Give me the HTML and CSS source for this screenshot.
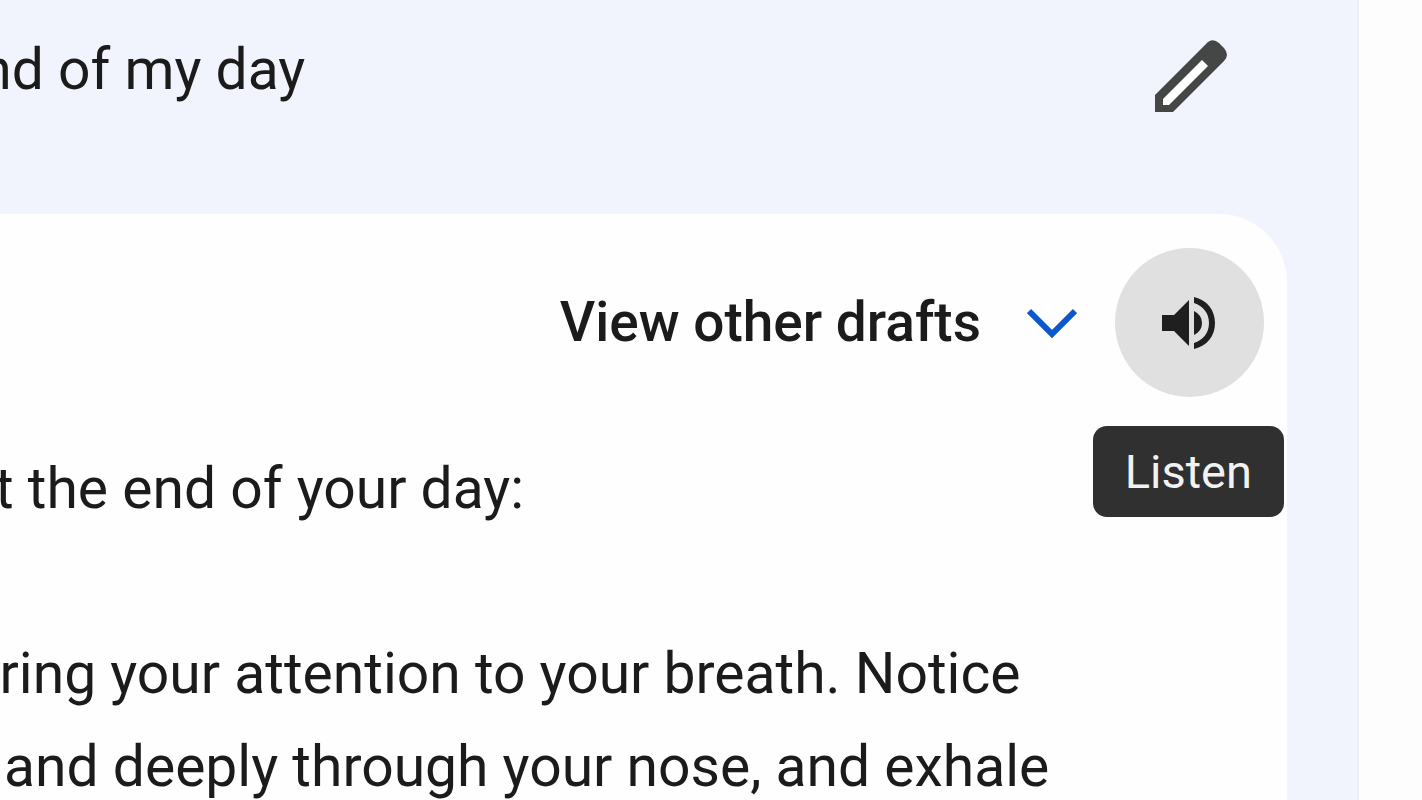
FILE: index.html
```html
<!DOCTYPE html>
<html lang="en">
<head>
    <meta charset="UTF-8">
    <title>Chat</title>
    <link rel="stylesheet" href="styles.css">
</head>
<body>
    <main class="chat">
        <div class="prompt">
            <p class="prompt-text">end of my day</p>
            <button class="edit-btn" type="button" aria-label="Edit">
                <svg width="72" height="72" viewBox="0 0 72 72">
                    <path fill="#444746" d="M0 55 L51 4 Q57 -3 64 3 L69 8 Q75 15 69 21 L18 72 H0 Z"/>
                    <path fill="#fff" d="M8 59 V65 H14 L53 26 L47 20 Z"/>
                </svg>
            </button>
        </div>

        <section class="card">
            <div class="toolbar">
                <button class="drafts-btn" type="button">
                    View other drafts
                    <svg width="50" height="30" viewBox="0 0 50 30">
                        <path fill="none" stroke="#0b57d0" stroke-width="6" d="M2 3 L25 26 L48 3"/>
                    </svg>
                </button>
                <div class="listen">
                    <button class="listen-btn" type="button" aria-label="Listen" aria-describedby="tip">
                        <svg width="56" height="52" viewBox="0 0 56 52">
                            <path fill="#1f1f1f" d="M0 18 H12 L27 3 V49 L12 34 H0 Z"/>
                            <path fill="#1f1f1f" d="M32 14 Q40 18 40 26 Q40 34 32 38 Z"/>
                            <path fill="#1f1f1f" d="M32 0 C45 3 53 13 53 26 C53 39 45 49 32 52 V46 C41 43 47 36 47 26 C47 16 41 9 32 6 Z"/>
                        </svg>
                    </button>
                    <span class="tooltip" id="tip" role="tooltip">Listen</span>
                </div>
            </div>
            <div class="reply">
                <p>at the end of your day:</p>
                <p>Bring your attention to your breath. Notice<br>and deeply through your nose, and exhale</p>
            </div>
        </section>
    </main>
</body>
</html>
```

FILE: styles.css
```css
* {
    box-sizing: border-box;
}

body {
    margin: 0;
    background: #fdfdfe;
    color: #1b1b1b;
    font-family: Roboto, "Liberation Sans", sans-serif;
    font-size: 57px;
    line-height: 93px;
    overflow: hidden;
}

p {
    margin: 0;
    white-space: nowrap;
}

button {
    border: none;
    padding: 0;
    background: none;
    color: inherit;
    font: inherit;
    cursor: pointer;
}

svg {
    display: block;
}

.chat {
    display: flex;
    flex-direction: column;
    min-height: 100vh;
    margin-right: 63px;
    padding-right: 70px;
    background: #f1f4fd;
    border-right: 2px solid #eceef6;
}

.prompt {
    display: flex;
    justify-content: space-between;
    align-items: center;
    height: 214px;
    padding: 0 60px 62px 0;
}

.prompt-text {
    padding-bottom: 14px;
    text-indent: -50px;
}

.card {
    flex: 1;
    padding-top: 34px;
    background: #fefefe;
    border-top-right-radius: 68px;
}

.toolbar {
    display: flex;
    justify-content: flex-end;
    align-items: center;
    gap: 38px;
    padding-right: 23px;
}

.drafts-btn {
    display: flex;
    align-items: center;
    gap: 46px;
    font-size: 55px;
    font-weight: 500;
}

.listen {
    position: relative;
}

.listen-btn {
    display: flex;
    justify-content: center;
    align-items: center;
    width: 149px;
    height: 149px;
    border-radius: 50%;
    background: #e0e0e0;
}

.tooltip {
    position: absolute;
    top: 178px;
    right: -20px;
    padding: 0 32px;
    border-radius: 14px;
    background: #303030;
    color: #f2f2f2;
    font-size: 47px;
    line-height: 91px;
}

.reply {
    padding: 45px 0 0 4px;
}

.reply p {
    text-indent: -40px;
}

.reply p + p {
    margin-top: 92px;
}
```
